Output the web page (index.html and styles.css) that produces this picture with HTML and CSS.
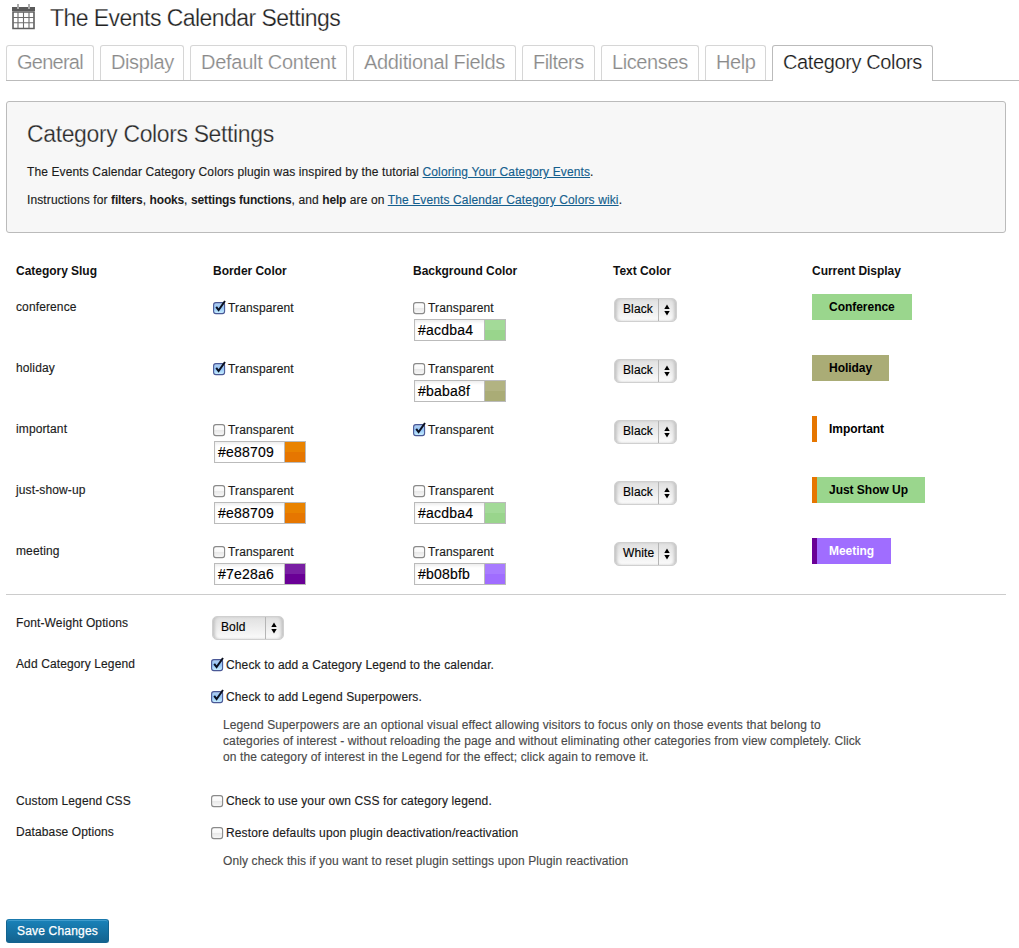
FILE: index.html
```html
<!DOCTYPE html>
<html lang="en">
<head>
<meta charset="utf-8">
<title>The Events Calendar Settings</title>
<link rel="stylesheet" href="styles.css">
</head>
<body>
<svg class="defs" width="0" height="0" aria-hidden="true">
  <defs>
    <linearGradient id="blue" x1="0" y1="0" x2="0" y2="1"><stop offset="0" stop-color="#b4cff0"/><stop offset=".5" stop-color="#93c4f7"/><stop offset="1" stop-color="#ccf2ff"/></linearGradient>
    <linearGradient id="grey" x1="0" y1="0" x2="0" y2="1"><stop offset="0" stop-color="#fff"/><stop offset=".45" stop-color="#f8f8f8"/><stop offset=".5" stop-color="#e8e8e8"/><stop offset="1" stop-color="#f8f8f8"/></linearGradient>
  </defs>
  <symbol id="on" viewBox="0 0 14 16"><rect x=".6" y="3.6" width="11" height="11" rx="2.3" fill="url(#blue)" stroke="#4a5896" stroke-width="1.1"/><path d="M3.2 7.8 5.6 11 12 2" fill="none" stroke="#0b1020" stroke-width="2"/></symbol>
  <symbol id="off" viewBox="0 0 14 16"><rect x=".6" y="3.6" width="11" height="11" rx="2.3" fill="url(#grey)" stroke="#8a8a8a" stroke-width="1.1"/></symbol>
  <symbol id="arrows" viewBox="0 0 6 12"><path d="M3 .5 5.7 5H.3ZM3 11.5.3 7h5.4Z" fill="#000"/></symbol>
</svg>

<header class="head">
  <svg class="cal" viewBox="0 0 24 26">
    <path d="M0 3h23v4H0z" fill="#5a5a5a"/>
    <path d="M1 8h21v16.5H1z" fill="#fff" stroke="#5f5f5f" stroke-width="1.6"/>
    <path d="M6 8v16M11.5 8v16M17 8v16M1 13.5h21M1 18.8h21" stroke="#6d6d6d" stroke-width="1.1"/>
    <path d="M5 0h2v5H5zM16 0h2v5h-2z" fill="#aaa"/>
  </svg>
  <h1 class="title">The Events Calendar Settings</h1>
</header>

<nav class="tabs">
  <a class="tab t1"><span>General</span></a><a class="tab t2"><span>Display</span></a><a class="tab t3"><span>Default Content</span></a><a class="tab t4"><span>Additional Fields</span></a><a class="tab t5"><span>Filters</span></a><a class="tab t6"><span>Licenses</span></a><a class="tab t7"><span>Help</span></a><a class="tab t8 active"><span>Category Colors</span></a>
</nav>

<section class="intro">
  <h2 class="intro-title">Category Colors Settings</h2>
  <p>The Events Calendar Category Colors plugin was inspired by the tutorial <a class="link">Coloring Your Category Events</a>.</p>
  <p>Instructions for <b>filters</b>, <b>hooks</b>, <b>settings functions</b>, and <b>help</b> are on <a class="link">The Events Calendar Category Colors wiki</a>.</p>
</section>

<section class="table">
  <div class="row headrow"><span>Category Slug</span><span>Border Color</span><span>Background Color</span><span>Text Color</span><span>Current Display</span></div>
  <div class="row">
    <span class="slug">conference</span>
    <div><label class="check"><svg><use href="#on"/></svg>Transparent</label></div>
    <div><label class="check"><svg><use href="#off"/></svg>Transparent</label><div class="color"><span class="hex">#acdba4</span><i class="swatch green"></i></div></div>
    <div><div class="select"><span>Black</span><i><svg><use href="#arrows"/></svg></i></div></div>
    <div><b class="badge b-green">Conference</b></div>
  </div>
  <div class="row">
    <span class="slug">holiday</span>
    <div><label class="check"><svg><use href="#on"/></svg>Transparent</label></div>
    <div><label class="check"><svg><use href="#off"/></svg>Transparent</label><div class="color"><span class="hex">#baba8f</span><i class="swatch olive"></i></div></div>
    <div><div class="select"><span>Black</span><i><svg><use href="#arrows"/></svg></i></div></div>
    <div><b class="badge b-olive">Holiday</b></div>
  </div>
  <div class="row">
    <span class="slug">important</span>
    <div><label class="check"><svg><use href="#off"/></svg>Transparent</label><div class="color"><span class="hex">#e88709</span><i class="swatch orange"></i></div></div>
    <div><label class="check"><svg><use href="#on"/></svg>Transparent</label></div>
    <div><div class="select"><span>Black</span><i><svg><use href="#arrows"/></svg></i></div></div>
    <div><b class="badge edge-orange">Important</b></div>
  </div>
  <div class="row">
    <span class="slug">just-show-up</span>
    <div><label class="check"><svg><use href="#off"/></svg>Transparent</label><div class="color"><span class="hex">#e88709</span><i class="swatch orange"></i></div></div>
    <div><label class="check"><svg><use href="#off"/></svg>Transparent</label><div class="color"><span class="hex">#acdba4</span><i class="swatch green"></i></div></div>
    <div><div class="select"><span>Black</span><i><svg><use href="#arrows"/></svg></i></div></div>
    <div><b class="badge b-green edge-orange">Just Show Up</b></div>
  </div>
  <div class="row">
    <span class="slug">meeting</span>
    <div><label class="check"><svg><use href="#off"/></svg>Transparent</label><div class="color"><span class="hex">#7e28a6</span><i class="swatch purple"></i></div></div>
    <div><label class="check"><svg><use href="#off"/></svg>Transparent</label><div class="color"><span class="hex">#b08bfb</span><i class="swatch violet"></i></div></div>
    <div><div class="select"><span>White</span><i><svg><use href="#arrows"/></svg></i></div></div>
    <div><b class="badge b-violet">Meeting</b></div>
  </div>
</section>

<section class="options">
  <div class="opt o-weight"><span>Font-Weight Options</span><div class="select wide"><span>Bold</span><i><svg><use href="#arrows"/></svg></i></div></div>
  <div class="opt o-legend"><span>Add Category Legend</span>
    <div>
      <label class="check"><svg><use href="#on"/></svg>Check to add a Category Legend to the calendar.</label>
      <label class="check second"><svg><use href="#on"/></svg>Check to add Legend Superpowers.</label>
      <p class="note">Legend Superpowers are an optional visual effect allowing visitors to focus only on those events that belong to<br>categories of interest - without reloading the page and without eliminating other categories from view completely. Click<br>on the category of interest in the Legend for the effect; click again to remove it.</p>
    </div>
  </div>
  <div class="opt o-css"><span>Custom Legend CSS</span><label class="check"><svg><use href="#off"/></svg>Check to use your own CSS for category legend.</label></div>
  <div class="opt o-db"><span>Database Options</span>
    <div>
      <label class="check"><svg><use href="#off"/></svg>Restore defaults upon plugin deactivation/reactivation</label>
      <p class="note">Only check this if you want to reset plugin settings upon Plugin reactivation</p>
    </div>
  </div>
</section>
<button class="save">Save Changes</button>
</body>
</html>
```
FILE: styles.css
```css
* { box-sizing: border-box; }
body { margin: 0; height: 948px; overflow: hidden; background: #fff; color: #1c1c1c; font: 12px/16px "Liberation Sans", Arial, sans-serif; letter-spacing: .12px; -webkit-text-stroke: .15px; }
h1, h2, p { margin: 0; font-weight: 400; }
b, .headrow { letter-spacing: -.03px; -webkit-text-stroke: 0; }
.defs { position: absolute; }

.head { display: flex; height: 45px; padding: 4px 0 0 12px; }
.cal { width: 24px; height: 26px; }
.title { margin-left: 14px; font-size: 23px; line-height: 28px; color: #222; letter-spacing: -0.55px; white-space: nowrap; -webkit-text-stroke: .25px #fff; }

.tabs { display: flex; gap: 6px; height: 36px; padding-left: 6px; background: linear-gradient(#bbb, #bbb) 6px 35px / 100% 1px no-repeat; }
.tab { height: 35px; border: 1px solid #d6d6d6; border-bottom: 0; border-radius: 3px 3px 0 0; padding-left: 10px; font-size: 20px; line-height: 33px; color: #8a8a8a; white-space: nowrap; -webkit-text-stroke: .2px #fff; }
.tab.active { height: 36px; border-color: #bbb; background: #fff; color: #1c1c1c; }
.t1 { width: 88px; letter-spacing: -.75px; }
.t2 { width: 84px; letter-spacing: -.4px; }
.t3 { width: 157px; letter-spacing: -.27px; }
.t4 { width: 163px; letter-spacing: -.35px; }
.t5 { width: 73px; letter-spacing: -.55px; }
.t6 { width: 98px; letter-spacing: -.4px; }
.t7 { width: 61px; letter-spacing: -.4px; }
.t8 { width: 161px; letter-spacing: -.38px; }

.intro { margin: 20px 0 0 6px; width: 1000px; height: 132px; padding: 18px 20px; background: #f7f7f7; border: 1px solid #bbb; border-radius: 3px; }
.intro-title { font-size: 23px; line-height: 28px; color: #2a2a2a; letter-spacing: -0.37px; -webkit-text-stroke: .25px #f7f7f7; }
.intro p { margin-top: 16px; }
.intro p + p { margin-top: 12px; }
.intro b { letter-spacing: -.16px; }
.link { color: #155f8e; text-decoration: underline; }

.table { margin-left: 6px; width: 1000px; height: 362px; padding: 30px 0 0 10px; border-bottom: 1px solid #ccc; }
.row { display: grid; grid-template-columns: 197px 200px 200px 199px 1fr; height: 61px; }
.headrow { height: 31px; font-weight: 700; color: #111; }
.slug { padding-top: 5px; }
.check { display: flex; height: 16px; margin-top: 6px; gap: 1px; white-space: nowrap; letter-spacing: .14px; }
.check svg { width: 14px; height: 16px; margin-top: -1px; }
.color { display: flex; margin: 3px 0 0 1px; width: 92px; height: 22px; border: 1px solid #bbb; box-shadow: inset 0 2px 3px #eee; }
.hex { width: 70px; padding-left: 3px; border-right: 1px solid #bbb; font-size: 14px; line-height: 20px; color: #000; letter-spacing: .2px; }
.swatch { flex: 1; }
.green { background: linear-gradient(#a3da98 50%, #99d58c 50%); }
.olive { background: linear-gradient(#b2b382 50%, #aaac76 50%); }
.orange { background: linear-gradient(#e98300 50%, #e67600 50%); }
.purple { background: linear-gradient(#791fa3 50%, #6a0096 50%); }
.violet { background: linear-gradient(#a87bff 50%, #a06dff 50%); }

.select { display: flex; margin: 4px 0 0 1px; width: 63px; height: 24px; border: 1px solid #d0d0d0; border-radius: 5px; background: linear-gradient(#e0e0e0, #fbfbfb); box-shadow: inset 3px 0 3px -1px #c4c4c4, inset -3px 0 3px -1px #c4c4c4; color: #000; }
.select span { width: 44px; padding-left: 8px; line-height: 21px; border-right: 1px solid #b5b5b5; }
.select i { flex: 1; display: flex; align-items: center; justify-content: center; padding-right: 1px; }
.select svg { width: 6px; height: 12px; }
.badge { display: inline-block; height: 26px; padding: 0 17px 0 12px; border-left: 5px solid transparent; line-height: 26px; color: #000; white-space: nowrap; }
.b-green { background: #9ad68d; border-color: #9ad68d; }
.b-olive { background: #aaac76; border-color: #aaac76; }
.b-violet { background: #a06dff; border-color: #6a0096; color: #fff; }
.edge-orange { border-color: #e67600; }

.options { padding: 20px 0 0 16px; height: 324px; }
.opt { display: grid; grid-template-columns: 195px 1fr; }
.opt .check { margin-top: 1px; }
.o-weight { height: 41px; }
.o-legend { height: 137px; }
.o-css { height: 31px; }
.opt.o-css .check { margin-top: 0; }
.wide { width: 72px; margin: 1px 0 0 1px; }
.wide span { width: 53px; }
.opt .second { margin-top: 16px; }
.note { margin: 12px 0 0 12px; color: #4a4a4a; letter-spacing: .11px; white-space: nowrap; }
.save { display: block; width: 103px; height: 24px; margin-left: 6px; padding: 0; border: 1px solid #13638f; border-top-color: #1a79ad; border-radius: 3px; background: linear-gradient(#1982b9, #14638f); box-shadow: inset 0 1px 0 #3f9bcb; color: #fff; font: 12px/22px "Liberation Sans", Arial, sans-serif; letter-spacing: .2px; -webkit-text-stroke: .25px #fff; }
```
